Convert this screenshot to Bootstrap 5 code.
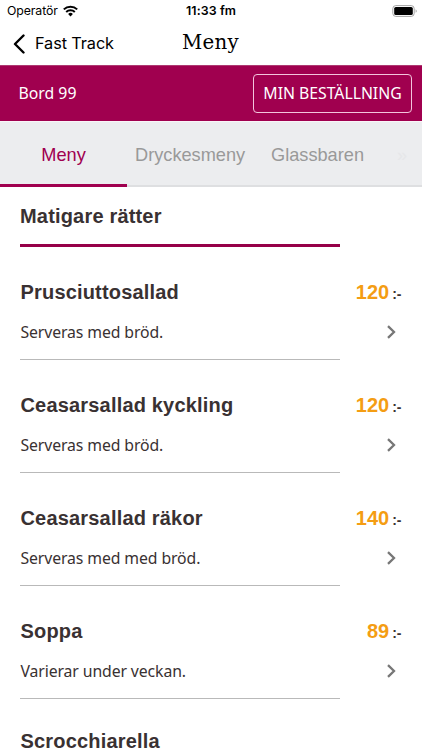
<!DOCTYPE html>
<html lang="sv">
<head>
<meta charset="utf-8">
<meta name="viewport" content="width=device-width, initial-scale=1">
<title>Meny</title>
<link href="https://cdn.jsdelivr.net/npm/bootstrap@5.3.0/dist/css/bootstrap.min.css" rel="stylesheet">
<style>
body{font-family:"Liberation Sans",Arial,sans-serif;background:#fff;color:#393132;height:750px;overflow:hidden}
.ui{font-family:Inter,sans-serif;color:#000}
.status{height:22px;font-size:12.3px;line-height:22px}
.status .carrier{width:186px;padding-left:7px;gap:5px;letter-spacing:-.1px}
.status .clock{font-weight:600;font-size:12.4px;letter-spacing:.1px}
.topnav{height:43px}
.back{width:182px;padding-left:13px;gap:10px;font-size:16.3px;letter-spacing:-.1px}
.page-title{font-family:"DejaVu Serif",serif;font-size:19.8px;line-height:42px;height:43px;letter-spacing:.3px;color:#000}
.table-bar{height:56px;background:#a0004f;color:#fff;padding:0 10px 0 18.5px;border-top:1px solid #ae3971}
.human{font-family:"Noto Sans",sans-serif}
.table-bar .human{font-size:15.8px}
.order{width:159px;height:39px;border:1px solid #f3c5dc;border-radius:4px;color:#fff;padding:0;line-height:37px}
.table-bar .order{letter-spacing:-.03px}
.tabs{height:66px;background:#ecedef;border-top:1px solid #faf5f8}
.tabs .nav-link{padding:0;height:65px;line-height:66px;font-size:18.2px;color:#999;border-bottom:2px solid #dedfe1}
.tabs .nav-link.active{color:#a0004f;border-bottom:3px solid #a0004f;width:127px;text-align:center}
.tabs .drinks{width:136px;padding-left:8px}
.tabs .ice{width:134px;padding-left:8px}
.tabs .more{flex:1;color:#e6e7e9}
.section-title{width:320px;margin-left:20.5px;height:60px;border-bottom:3px solid #960048;line-height:58px}
.name,.section-title{font-weight:700;font-size:20px;letter-spacing:.18px;white-space:nowrap}
.dish{height:113px;padding-left:20px}
.section-title{margin-left:20px}
.dish-main{width:320px;padding-left:.5px;border-bottom:1px solid #b9b9b9}
.name{line-height:24px;padding-top:33px}
.desc{line-height:24px;padding-top:16px;font-size:15.8px;letter-spacing:-.11px}
.side{width:61.5px;padding-top:33px}
.price{line-height:24px;font-size:20px;font-weight:700;color:#f49d13}
.unit{font-size:14px;font-weight:700;color:#393132;margin-left:3px}
.go{margin:19px 5px 0 0}
.cut{height:auto;padding-left:20.5px}
.cut .name{line-height:18px}
svg{display:block;flex:none}
</style>
<script src="https://cdn.jsdelivr.net/npm/bootstrap@5.3.0/dist/js/bootstrap.bundle.min.js"></script>
</head>
<body>
<header class="ui">
  <div class="status d-flex align-items-center">
    <div class="carrier d-flex align-items-center"><span>Operatör</span>
      <svg width="15" height="12" viewBox="0 0 15 12"><g fill="none" stroke="#000" stroke-width="2"><path d="M.8 4.4a9.5 9.5 0 0 1 13.4 0M3.2 7a6.1 6.1 0 0 1 8.6 0"/></g><path d="M5.1 8.9a3.4 3.4 0 0 1 4.8 0L7.5 11.4z"/></svg>
    </div>
    <span class="clock">11:33 fm</span>
    <svg class="ms-auto me-1" width="26" height="12" viewBox="0 0 26 12"><rect x=".8" y=".6" width="21.4" height="10.8" rx="3" fill="#fff" stroke="#a4a4a4"/><rect x="2.2" y="2" width="18.6" height="8" rx="1.6"/><path d="M23.7 4.2q2 1.8 0 3.6z" fill="#999"/></svg>
  </div>
  <div class="topnav d-flex align-items-center">
    <div class="back d-flex align-items-center">
      <svg width="12" height="20" viewBox="0 0 12 20"><path d="M10.5 1.5 2 10l8.5 8.5" fill="none" stroke="#000" stroke-width="2.4" stroke-linecap="round" stroke-linejoin="round"/></svg>
      <span>Fast Track</span>
    </div>
    <span class="page-title">Meny</span>
  </div>
</header>
<div class="table-bar d-flex align-items-center justify-content-between">
  <span class="human bord">Bord 99</span>
  <button class="btn order human" type="button"><span>MIN BESTÄLLNING</span></button>
</div>
<nav class="tabs nav flex-nowrap overflow-hidden">
  <a class="nav-link active" href="#">Meny</a>
  <a class="nav-link drinks" href="#">Dryckesmeny</a>
  <a class="nav-link ice" href="#">Glassbaren</a>
  <a class="nav-link more" href="#">»</a>
</nav>
<main>
  <div class="section-title">Matigare rätter</div>
  <div class="dish d-flex"><div class="dish-main"><div class="name">Prusciuttosallad</div><div class="desc human">Serveras med bröd.</div></div><div class="side d-flex flex-column align-items-end"><div class="price">120<span class="unit">:-</span></div><svg class="go" width="10" height="14" viewBox="0 0 10 14"><path d="m1 1.2 6 5.8-6 5.8" fill="none" stroke="#777" stroke-width="2.3"/></svg></div></div>
  <div class="dish d-flex"><div class="dish-main"><div class="name">Ceasarsallad kyckling</div><div class="desc human">Serveras med bröd.</div></div><div class="side d-flex flex-column align-items-end"><div class="price">120<span class="unit">:-</span></div><svg class="go" width="10" height="14" viewBox="0 0 10 14"><path d="m1 1.2 6 5.8-6 5.8" fill="none" stroke="#777" stroke-width="2.3"/></svg></div></div>
  <div class="dish d-flex"><div class="dish-main"><div class="name">Ceasarsallad räkor</div><div class="desc human">Serveras med med bröd.</div></div><div class="side d-flex flex-column align-items-end"><div class="price">140<span class="unit">:-</span></div><svg class="go" width="10" height="14" viewBox="0 0 10 14"><path d="m1 1.2 6 5.8-6 5.8" fill="none" stroke="#777" stroke-width="2.3"/></svg></div></div>
  <div class="dish d-flex"><div class="dish-main"><div class="name">Soppa</div><div class="desc human">Varierar under veckan.</div></div><div class="side d-flex flex-column align-items-end"><div class="price">89<span class="unit">:-</span></div><svg class="go" width="10" height="14" viewBox="0 0 10 14"><path d="m1 1.2 6 5.8-6 5.8" fill="none" stroke="#777" stroke-width="2.3"/></svg></div></div>
  <div class="dish cut"><div class="name">Scrocchiarella</div></div>
</main>
</body>
</html>
